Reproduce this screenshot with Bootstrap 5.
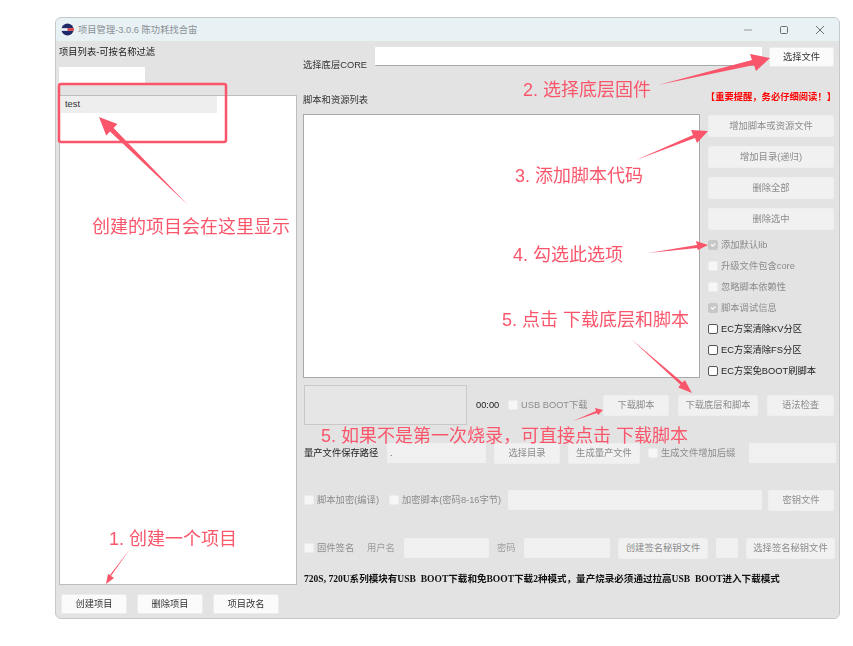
<!DOCTYPE html>
<html lang="zh-CN">
<head>
  <meta charset="UTF-8">
  <title>项目管理</title>
  <link rel="stylesheet" href="https://cdn.jsdelivr.net/npm/bootstrap@5.3.0/dist/css/bootstrap.min.css">
  <style>
    html, body { background: #fff; overflow: hidden; }
    body {
      font-family: "Liberation Sans", "Noto Sans CJK SC", sans-serif;
      font-size: 9.3px;
      line-height: 14px;
      color: #333;
      width: 853px;
      height: 646px;
      position: relative;
    }
    .app-window {
      position: absolute;
      left: 55px;
      top: 17px;
      width: 785px;
      height: 602px;
      background: #e3e3e3;
      border: 1px solid #c4c8ca;
      border-radius: 6px;
      overflow: hidden;
      filter: blur(.4px);
    }
    .title-bar { height: 23px; background: #e8f1f4; padding: 0 1px 0 5px; color: #8a8f93; }
    .win-ctrl { width: 36px; text-align: center; line-height: 0; }
    .left-pane { width: 247px; padding: 0 0 0 3px; }
    .right-pane { width: 536px; padding: 6px 0 0 0; }
    .pane-label { height: 14px; margin-top: 4px; color: #222; }
    .filter-box { width: 86px; height: 18px; margin-top: 8px; }
    .flat-input {
      background: #f0f0f0;
      border: 0;
      border-radius: 1px;
      padding: 0 3px;
      font-size: 9.3px;
      min-height: 0;
      color: #666;
    }
    .flat-input.bright { background: #fff; border-bottom: 1px solid #a9a9a9; }
    .project-list {
      width: 238px;
      height: 490px;
      margin-top: 10px;
      background: #fff;
      border: 1px solid #bdbdbd;
      border-radius: 0;
      padding: 0 1px;
    }
    .project-item {
      width: 156px;
      height: 17px;
      background: #eeeeee;
      border: 0;
      border-radius: 0;
      padding: 1px 4px 0;
      font-size: 9.3px;
      line-height: 15px;
      color: #333;
    }
    .tool-btn {
      background: #fbfbfb;
      border: 1px solid #ececec;
      border-radius: 2px;
      padding: 0;
      font-size: 9.3px;
      line-height: 14px;
      color: #333;
      white-space: nowrap;
    }
    .tool-btn:disabled { background: #f1f1f1; border-color: #eeeeee; color: #8c8c8c; opacity: 1; }
    .left-btns { margin-top: 9px; padding-left: 2px; gap: 10px; }
    .left-btns .tool-btn { width: 66px; height: 20px; }
    .row-core { height: 20px; gap: 7px; }
    .core-label { width: 65px; margin-bottom: -5px; color: #333; white-space: nowrap; }
    .core-input { width: 387px; height: 19px; align-self: flex-start; }
    .core-btn { width: 65px; height: 20px; }
    .row-head { height: 18px; margin-top: 23px; padding-right: 3px; }
    .head-label { margin-top: 1px; }
    .warn-text {
      color: #f00;
      font-family: "Liberation Serif", "Noto Sans CJK SC", serif;
      font-weight: 700;
      font-size: 9.3px;
      margin-top: -4px;
      white-space: nowrap;
    }
    .row-main { height: 264px; margin-top: 6px; gap: 8px; }
    .script-list { width: 397px; height: 264px; background: #fff; border: 1px solid #a9a9a9; }
    .side-col { width: 126px; }
    .side-col .tool-btn { height: 22px; margin-top: 9px; }
    .side-col .tool-btn:first-child { margin-top: 1px; }
    .opt-list { margin-top: 8px; gap: 7px; }
    .opt-row { height: 14px; gap: 3px; white-space: nowrap; color: #222; }
    .opt-row.off { color: #8c8c8c; }
    .opt-row .form-check-input {
      width: 10px;
      height: 10px;
      margin: 0;
      flex: none;
      border: 1px solid #555;
      border-radius: 2px;
      background-color: #fff;
      opacity: 1;
    }
    .opt-row .form-check-input:disabled { border-color: #ededed; background-color: #f6f6f6; }
    .opt-row .form-check-input:checked:disabled { background-color: #c8c8c8; border-color: #c8c8c8; }
    .row-prog, .row-path, .row-enc, .row-sign { padding-left: 1px; }
    .row-prog { height: 40px; margin-top: 7px; gap: 9px; }
    .prog-box { width: 163px; height: 40px; background: #e6e6e6; border: 1px solid #c9c9c9; }
    .prog-time { width: 23px; color: #222; }
    .row-prog .tool-btn, .row-path .tool-btn, .row-enc .tool-btn, .row-sign .tool-btn { height: 21px; }
    .row-path { height: 20px; margin-top: 18px; gap: 8px; }
    .row-enc { height: 20px; margin-top: 27px; gap: 6px; }
    .row-sign { height: 20px; margin-top: 28px; gap: 8px; }
    .row-path .flat-input, .row-enc .flat-input, .row-sign .flat-input { height: 20px; }
    .muted-label { color: #9c9c9c; }
    .dark-label { color: #222; white-space: nowrap; }
    .note-line {
      margin-top: 14px;
      padding-left: 1px;
      font-family: "Liberation Serif", "Noto Sans CJK SC", serif;
      font-size: 9.55px;
      font-weight: 700;
      color: #111;
      height: 16px;
      white-space: pre;
    }
    .wd-19 { width: 19px; } .wd-22 { width: 22px; } .wd-29 { width: 29px; } .wd-55 { width: 55px; }
    .wd-66 { width: 66px; } .wd-67 { width: 67px; } .wd-72 { width: 72px; } .wd-75 { width: 75px; }
    .wd-79 { width: 79px; } .wd-80 { width: 80px; } .wd-85 { width: 85px; } .wd-86 { width: 86px; }
    .wd-87 { width: 87px; } .wd-89 { width: 89px; } .wd-90 { width: 90px; } .wd-93 { width: 93px; }
    .wd-99 { width: 99px; } .wd-113 { width: 113px; } .wd-254 { width: 254px; }
    .markup-layer { position: absolute; left: 0; top: 0; width: 853px; height: 646px; pointer-events: none; }
    .callout {
      position: absolute;
      color: #f9566b;
      font-size: 18px;
      line-height: 24px;
      white-space: nowrap;
    }
    .c-core { left: 523px; top: 78px; }
    .c-list { left: 92px; top: 215px; }
    .c-code { left: 515px; top: 164px; }
    .c-lib { left: 513px; top: 243px; }
    .c-all { left: 502px; top: 308px; }
    .c-script { left: 321px; top: 424px; }
    .c-make { left: 109px; top: 527px; }
  </style>
</head>
<body>

  <div class="app-window d-flex flex-column">
    <!-- Title bar -->
    <div class="title-bar d-flex align-items-center flex-shrink-0">
      <svg width="13" height="13" viewBox="0 0 14 14" class="me-1">
        <circle cx="7" cy="7" r="6.5" fill="#1f2a6b"/>
        <rect x="0" y="5.5" width="14" height="3" fill="#e9eef4"/>
        <rect x="7" y="5.5" width="7" height="3" fill="#d8474f"/>
      </svg>
      <span>项目管理-3.0.6 陈功耗找合宙</span>
      <div class="win-ctrl ms-auto">
        <svg width="10" height="10" viewBox="0 0 10 10"><path d="M1 5h8" stroke="#9a9a9a" fill="none"/></svg>
      </div>
      <div class="win-ctrl">
        <svg width="10" height="10" viewBox="0 0 10 10"><rect x="1.5" y="1.5" width="7" height="7" rx="1" stroke="#6f6f6f" fill="none"/></svg>
      </div>
      <div class="win-ctrl">
        <svg width="10" height="10" viewBox="0 0 10 10"><path d="M1 1l8 8M9 1l-8 8" stroke="#6f6f6f" fill="none"/></svg>
      </div>
    </div>

    <div class="d-flex flex-grow-1">
      <!-- Left pane -->
      <div class="left-pane">
        <div class="pane-label">项目列表-可按名称过滤</div>
        <input type="text" class="form-control flat-input bright filter-box">
        <div class="list-group project-list">
          <div class="list-group-item project-item">test</div>
        </div>
        <div class="d-flex left-btns">
          <button class="btn tool-btn">创建项目</button>
          <button class="btn tool-btn">删除项目</button>
          <button class="btn tool-btn">项目改名</button>
        </div>
      </div>

      <!-- Right pane -->
      <div class="right-pane">
        <div class="d-flex align-items-end row-core">
          <span class="core-label">选择底层CORE</span>
          <input type="text" class="form-control flat-input bright core-input">
          <button class="btn tool-btn core-btn">选择文件</button>
        </div>

        <div class="d-flex justify-content-between align-items-center row-head">
          <span class="head-label">脚本和资源列表</span>
          <span class="warn-text">【重要提醒，务必仔细阅读！】</span>
        </div>

        <div class="d-flex row-main">
          <div class="script-list"></div>
          <div class="side-col d-flex flex-column">
            <button class="btn tool-btn" disabled>增加脚本或资源文件</button>
            <button class="btn tool-btn" disabled>增加目录(递归)</button>
            <button class="btn tool-btn" disabled>删除全部</button>
            <button class="btn tool-btn" disabled>删除选中</button>
            <div class="opt-list d-flex flex-column">
              <label class="opt-row off d-flex align-items-center"><input type="checkbox" class="form-check-input" checked disabled>添加默认lib</label>
              <label class="opt-row off d-flex align-items-center"><input type="checkbox" class="form-check-input" disabled>升级文件包含core</label>
              <label class="opt-row off d-flex align-items-center"><input type="checkbox" class="form-check-input" disabled>忽略脚本依赖性</label>
              <label class="opt-row off d-flex align-items-center"><input type="checkbox" class="form-check-input" checked disabled>脚本调试信息</label>
              <label class="opt-row d-flex align-items-center"><input type="checkbox" class="form-check-input">EC方案清除KV分区</label>
              <label class="opt-row d-flex align-items-center"><input type="checkbox" class="form-check-input">EC方案清除FS分区</label>
              <label class="opt-row d-flex align-items-center"><input type="checkbox" class="form-check-input">EC方案免BOOT刷脚本</label>
            </div>
          </div>
        </div>

        <div class="d-flex align-items-center row-prog">
          <div class="prog-box"></div>
          <span class="prog-time">00:00</span>
          <label class="opt-row off d-flex align-items-center wd-86"><input type="checkbox" class="form-check-input" disabled>USB BOOT下载</label>
          <button class="btn tool-btn wd-66" disabled>下载脚本</button>
          <button class="btn tool-btn wd-80" disabled>下载底层和脚本</button>
          <button class="btn tool-btn wd-67" disabled>语法检查</button>
        </div>

        <div class="d-flex align-items-center row-path">
          <span class="dark-label wd-75">量产文件保存路径</span>
          <input type="text" class="form-control flat-input wd-99" value=".">
          <button class="btn tool-btn wd-66" disabled>选择目录</button>
          <button class="btn tool-btn wd-72" disabled>生成量产文件</button>
          <label class="opt-row off d-flex align-items-center wd-93"><input type="checkbox" class="form-check-input" disabled>生成文件增加后缀</label>
          <input type="text" class="form-control flat-input wd-87">
        </div>

        <div class="d-flex align-items-center row-enc">
          <label class="opt-row off d-flex align-items-center wd-79"><input type="checkbox" class="form-check-input" disabled>脚本加密(编译)</label>
          <label class="opt-row off d-flex align-items-center wd-113"><input type="checkbox" class="form-check-input" disabled>加密脚本(密码8-16字节)</label>
          <input type="text" class="form-control flat-input wd-254">
          <button class="btn tool-btn wd-66" disabled>密钥文件</button>
        </div>

        <div class="d-flex align-items-center row-sign">
          <label class="opt-row off d-flex align-items-center wd-55"><input type="checkbox" class="form-check-input" disabled>固件签名</label>
          <span class="muted-label wd-29">用户名</span>
          <input type="text" class="form-control flat-input wd-85">
          <span class="muted-label wd-19">密码</span>
          <input type="text" class="form-control flat-input wd-86">
          <button class="btn tool-btn wd-90" disabled>创建签名秘钥文件</button>
          <input type="text" class="form-control flat-input wd-22">
          <button class="btn tool-btn wd-89" disabled>选择签名秘钥文件</button>
        </div>

        <div class="note-line">720S, 720U系列模块有USB  BOOT下载和免BOOT下载2种模式，量产烧录必须通过拉高USB  BOOT进入下载模式</div>
      </div>
    </div>
  </div>

  <!-- Red markup drawn over the window -->
  <svg class="markup-layer" viewBox="0 0 853 646">
    <g fill="#f9566b">
      <rect x="59" y="84" width="167" height="58" rx="2" fill="none" stroke="#f9566b" stroke-width="2.5"/>
      <polygon points="188,205 113.6,127.9 117.4,124 99,117 106.2,135.4 110,131.5"/>
      <polygon points="658,85 752,60 750,54 770,58 756,71 754,65"/>
      <polygon points="636,160 693,135 691,130 708,131 697,143 695,138"/>
      <polygon points="648,253 697,245 696,241 708,245 698,250 697,248"/>
      <polygon points="631,339 682.5,382.6 684.8,380 692,393 678.2,387.4 680.5,384.8"/>
      <polygon points="573,421 596,411 595,408 603,410 598,415 597,413"/>
      <polygon points="130,549 111,576 114,578 106,584 108,574 110,575"/>
    </g>
  </svg>
  <span class="callout c-core">2. 选择底层固件</span>
  <span class="callout c-list">创建的项目会在这里显示</span>
  <span class="callout c-code">3. 添加脚本代码</span>
  <span class="callout c-lib">4. 勾选此选项</span>
  <span class="callout c-all">5. 点击 下载底层和脚本</span>
  <span class="callout c-script">5. 如果不是第一次烧录，可直接点击 下载脚本</span>
  <span class="callout c-make">1. 创建一个项目</span>

  <script src="https://cdn.jsdelivr.net/npm/bootstrap@5.3.0/dist/js/bootstrap.bundle.min.js"></script>
</body>
</html>
